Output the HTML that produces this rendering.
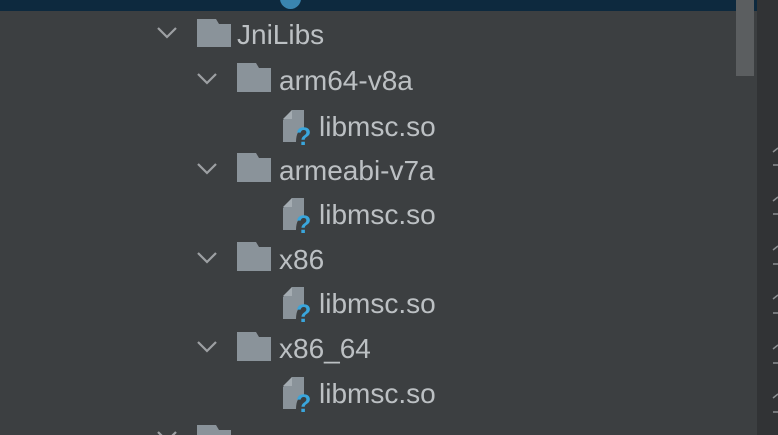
<!DOCTYPE html><html><head><style>
body{margin:0;width:778px;height:435px;background:#3c3f41;overflow:hidden;position:relative;font-family:"Liberation Sans",sans-serif;}
.t{position:absolute;color:#bcc0c3;font-size:28px;line-height:1;}
</style></head><body>
<div style="position:absolute;left:0;top:0;width:757px;height:11px;background:#0d293e"></div>
<div style="position:absolute;left:280px;top:-12px;width:21px;height:21px;border-radius:50%;background:#3a85b0"></div>
<div style="position:absolute;left:736px;top:0;width:18px;height:76px;background:#5b5e60"></div>
<div style="position:absolute;left:757px;top:0;width:21px;height:435px;background:#313335"></div>
<svg width="778" height="435" style="position:absolute;left:0;top:0">
<g stroke="#9da0a3" stroke-width="2.2" fill="none">
<path d="M158 28l9 9 9-9"/><path d="M198 74l9 9 9-9"/><path d="M198 164l9 9 9-9"/><path d="M198 253l9 9 9-9"/><path d="M198 342l9 9 9-9"/><path d="M158 432l9 9 9-9"/>
</g>
<g fill="#8a939a">
<path d="M197 19h19l3 5h12v23h-34z"/>
<path d="M237 63h19l3 5h12v24h-34z"/>
<path d="M237 153h19l3 5h12v24h-34z"/>
<path d="M237 242h19l3 5h12v24h-34z"/>
<path d="M237 332h19l3 5h12v24h-34z"/>
<path d="M197 425h19l3 5h12v10h-34z"/>
</g>
<g id="f"><path d="M292 110h12v18q-8 2-8 14h-13v-22z" fill="#8a939a"/><path d="M283 119l9-9v9z" fill="#a4acb2"/>
<text x="296" y="145" font-size="25" font-weight="bold" fill="#3aa6dc" font-family="Liberation Sans">?</text></g>
<use href="#f" y="88"/><use href="#f" y="177"/><use href="#f" y="267"/>
<g stroke="#8b8e91" stroke-width="1.5" fill="none">
<path d="M773 152l5-4M773 165h5M773 201l5-4M773 214h5M773 250l5-4M773 264h5M773 299l5-4M773 313h5M773 349l5-4M773 363h5M773 398l5-4M773 412h5"/></g>
</svg>
<div class="t" style="left:237px;top:21px">JniLibs</div>
<div class="t" style="left:279px;top:67px">arm64-v8a</div>
<div class="t" style="left:319px;top:113px">libmsc.so</div>
<div class="t" style="left:279px;top:157px">armeabi-v7a</div>
<div class="t" style="left:319px;top:201px">libmsc.so</div>
<div class="t" style="left:279px;top:246px">x86</div>
<div class="t" style="left:319px;top:290px">libmsc.so</div>
<div class="t" style="left:279px;top:335px">x86_64</div>
<div class="t" style="left:319px;top:380px">libmsc.so</div>
</body></html>
